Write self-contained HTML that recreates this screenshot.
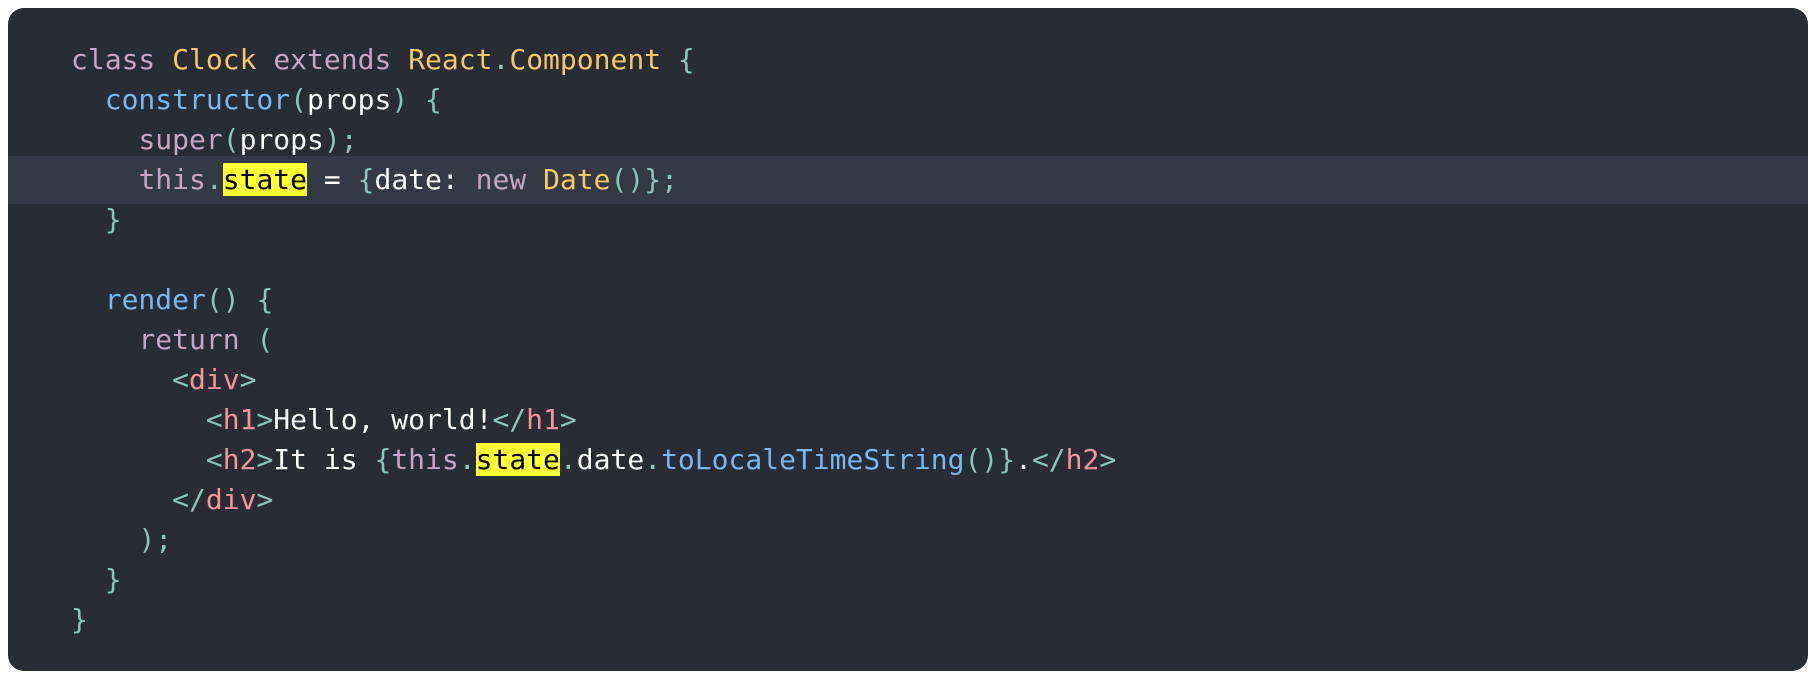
<!DOCTYPE html>
<html><head><style>
html,body{margin:0;padding:0;background:#fff;width:1814px;height:678px;overflow:hidden}
.box{position:absolute;left:8px;top:8px;width:1800px;height:663px;background:#282c34;border-radius:16px;overflow:hidden}
.hl{position:absolute;left:0;right:0;top:148px;height:48px;background:#343a45}
pre{position:absolute;left:63px;top:32px;margin:0;font-family:"DejaVu Sans Mono","Liberation Mono",monospace;font-size:28px;line-height:40px;color:#fff;white-space:pre}
.k{color:#c5a5c5}.c{color:#fac863}.p{color:#88c6be}.f{color:#79b6f2}.t{color:#fc929e}
.y{background:#ffff33;color:#000}
</style></head><body>
<div class="box"><div class="hl"></div>
<pre><span class="k">class</span> <span class="c">Clock</span> <span class="k">extends</span> <span class="c">React</span><span class="p">.</span><span class="c">Component</span> <span class="p">{</span>
  <span class="f">constructor</span><span class="p">(</span>props<span class="p">)</span> <span class="p">{</span>
    <span class="k">super</span><span class="p">(</span>props<span class="p">);</span>
    <span class="k">this</span><span class="p">.</span><span class="y">state</span> = <span class="p">{</span>date: <span class="k">new</span> <span class="c">Date</span><span class="p">()};</span>
  <span class="p">}</span>

  <span class="f">render</span><span class="p">()</span> <span class="p">{</span>
    <span class="k">return</span> <span class="p">(</span>
      <span class="p">&lt;</span><span class="t">div</span><span class="p">&gt;</span>
        <span class="p">&lt;</span><span class="t">h1</span><span class="p">&gt;</span>Hello, world!<span class="p">&lt;/</span><span class="t">h1</span><span class="p">&gt;</span>
        <span class="p">&lt;</span><span class="t">h2</span><span class="p">&gt;</span>It is <span class="p">{</span><span class="k">this</span><span class="p">.</span><span class="y">state</span><span class="p">.</span>date<span class="p">.</span><span class="f">toLocaleTimeString</span><span class="p">()}</span>.<span class="p">&lt;/</span><span class="t">h2</span><span class="p">&gt;</span>
      <span class="p">&lt;/</span><span class="t">div</span><span class="p">&gt;</span>
    <span class="p">);</span>
  <span class="p">}</span>
<span class="p">}</span></pre>
</div>
</body></html>
